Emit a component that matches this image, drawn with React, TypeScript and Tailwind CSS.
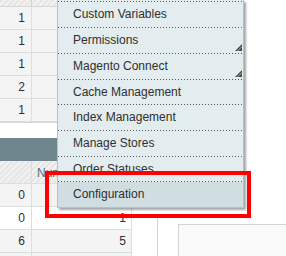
import React from 'react'

const menuItems: { label: string; h: string; arrow?: boolean; active?: boolean }[] = [
  { label: 'Custom Variables', h: 'h-[25px]' },
  { label: 'Permissions', h: 'h-[25px]', arrow: true },
  { label: 'Magento Connect', h: 'h-[25px]', arrow: true },
  { label: 'Cache Management', h: 'h-[24px]' },
  { label: 'Index Management', h: 'h-[25px]' },
  { label: 'Manage Stores', h: 'h-[25px]' },
  { label: 'Order Statuses', h: 'h-[24px]' },
  { label: 'Configuration', h: 'h-[25px]', active: true },
]

const topRows = ['1', '1', '1', '2', '1']
const bottomRows: [string, string][] = [
  ['0', ''],
  ['0', '1'],
  ['6', '5'],
  ['', ''],
]

const hatch =
  'bg-[repeating-linear-gradient(135deg,#e6e6e6_0px,#e6e6e6_2px,#f2f2f2_2px,#f2f2f2_4px)]'

function Dots() {
  return (
    <div className="h-px w-full bg-[linear-gradient(to_right,#555_1px,transparent_1px)] bg-[length:3px_1px] bg-repeat-x" />
  )
}

function SubArrow() {
  return (
    <svg className="absolute right-[1px] bottom-[2px]" width="7" height="7" viewBox="0 0 7 7">
      <polygon points="7,0 7,7 0,7" fill="#4b4b4b" />
      <line x1="7" y1="2.5" x2="2.5" y2="7" stroke="#a7adaf" strokeWidth="1" />
    </svg>
  )
}

function Row({ a, b, white }: { a: string; b: string; white?: boolean }) {
  return (
    <div
      className={`flex h-[23px] border-b border-[#dadfe0] ${white ? 'bg-white' : 'bg-[#f4f4f4]'}`}
    >
      <div className="w-[32px] border-r border-[#dadfe0] pr-[6px] text-right leading-[22px]">{a}</div>
      <div className="w-[100px] border-r border-[#dadfe0] pr-[5px] text-right leading-[22px]">{b}</div>
    </div>
  )
}

export default function App() {
  return (
    <div className="relative w-[286px] h-[256px] overflow-hidden bg-white font-['Liberation_Sans',Arial,sans-serif] text-[12px] text-[#2f2f2f]">
      {/* top grid, cut by the window */}
      <div className="-mt-[16px] w-[132px]">
        <div className={`flex h-[23px] border-b border-[#d6d6d6] ${hatch}`}>
          <div className="w-[32px] border-r border-[#d0d0d0]" />
          <div className="w-[100px] pl-[6px] leading-[22px] text-[#5e6b74]">Status</div>
        </div>
        {topRows.map((v, i) => (
          <Row key={i} a={v} b="" />
        ))}
        <div className="h-px bg-[#d6d6d6]" />
      </div>

      {/* bottom section */}
      <div className="mt-[15px] flex">
        <div className="w-[132px]">
          <div className="h-[23px] bg-[#6f868e]" />
          <div className={`flex h-[23px] border-b border-[#dadfe0] ${hatch}`}>
            <div className="w-[32px] border-r border-[#dadfe0]" />
            <div className="w-[100px] border-r border-[#dadfe0] pl-[5px] leading-[24px] text-[#5e6b74]">
              Num
            </div>
          </div>
          {bottomRows.map(([a, b], i) => (
            <Row key={i} a={a} b={b} white={i === 1} />
          ))}
        </div>
        <div className="w-[25px]" />
        <div className="mt-[80px] flex-1 border-l border-[#d3d3d3] pt-[6px] pl-[20px]">
          <div className="h-[40px] border-t border-l border-[#d4d4d4] bg-[#f9f9f9]" />
        </div>
      </div>

      {/* dropdown menu */}
      <div className="absolute left-[57px] top-0 w-[187px] border-l border-r border-b border-[#b7c1c4] bg-[#e3ecee] pt-px shadow-[2px_2px_2px_rgba(0,0,0,0.35)]">
        {menuItems.map((it) => (
          <div key={it.label}>
            <Dots />
            <div
              className={`relative ${it.h} pl-[15px] leading-[25px] ${it.active ? 'bg-[#d0dee2]' : ''}`}
            >
              {it.label}
              {it.arrow && <SubArrow />}
            </div>
          </div>
        ))}
      </div>

      {/* highlight box */}
      <div className="absolute left-[45px] top-[171px] w-[206px] h-[47px] border-[4px] border-[#ff0000]" />
    </div>
  )
}
